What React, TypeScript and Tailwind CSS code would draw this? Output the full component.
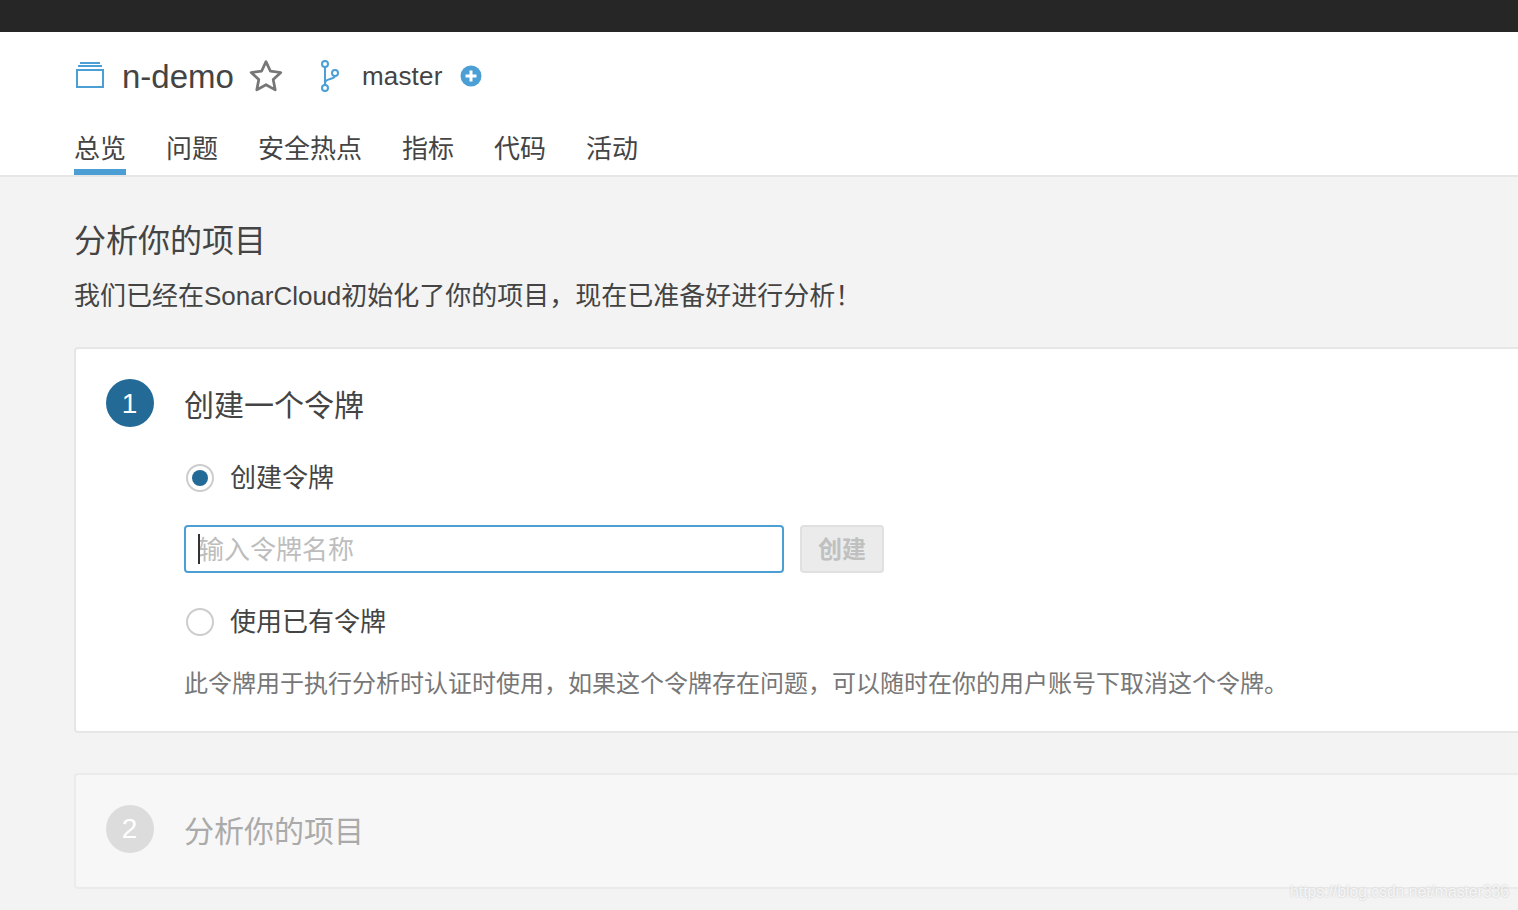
const font = { fontFamily: '"Liberation Sans", "Noto Sans CJK SC", sans-serif' };

const tabs = ['总览', '问题', '安全热点', '指标', '代码', '活动'];

function ProjectIcon() {
  return (
    <svg width="31" height="28" viewBox="0 0 31 28" fill="none" stroke="#4b9fd5" strokeWidth="2">
      <rect x="3" y="8" width="26" height="17" />
      <path d="M4 4h24M6 1h20" />
    </svg>
  );
}

function StarIcon() {
  return (
    <svg width="36" height="36" viewBox="0 0 34 34" fill="none" stroke="#777" strokeWidth="2.6" strokeLinejoin="round">
      <path d="M17 3.5l4.2 9 9.8 1.2-7.2 6.7 1.9 9.7-8.7-4.9-8.7 4.9 1.9-9.7L3 13.7l9.8-1.2z" />
    </svg>
  );
}

function BranchIcon() {
  return (
    <svg width="24" height="34" viewBox="0 0 24 34" fill="none" stroke="#4b9fd5" strokeWidth="2">
      <circle cx="7" cy="5" r="3" />
      <circle cx="7" cy="29" r="3" />
      <circle cx="17" cy="14" r="3" />
      <path d="M7 8v18M7 24c0-5 9-3 10-7" />
    </svg>
  );
}

function PlusIcon() {
  return (
    <svg width="22" height="22" viewBox="0 0 22 22">
      <circle cx="11" cy="11" r="10.5" fill="#4b9fd5" />
      <path d="M11 5.5v11M5.5 11h11" stroke="#fff" strokeWidth="3" />
    </svg>
  );
}

function Radio({ checked }: { checked?: boolean }) {
  return (
    <span className="flex h-7 w-7 shrink-0 items-center justify-center rounded-full border-2 border-[#cdcdcd] bg-white">
      {checked && <span className="h-[16px] w-[16px] rounded-full bg-[#236a97]" />}
    </span>
  );
}

export default function App() {
  return (
    <div style={font} className="relative h-[910px] w-[1518px] overflow-hidden bg-[#f3f3f3] text-[#444]">
      <div className="h-8 bg-[#262626]" />

      <header className="h-[145px] border-b-2 border-[#e6e6e6] bg-white pl-[74px]">
        <div className="flex h-[88px] items-center">
          <ProjectIcon />
          <span className="ml-[17px] pt-[1px] text-[33px] leading-none">n-demo</span>
          <span className="ml-[14px] flex"><StarIcon /></span>
          <span className="ml-[34px] flex"><BranchIcon /></span>
          <span className="ml-[20px] text-[26px] leading-none tracking-[0.2px]">master</span>
          <span className="ml-[17px] flex"><PlusIcon /></span>
        </div>
        <nav className="flex gap-10">
          {tabs.map((t, i) => (
            <div
              key={t}
              className={`h-[55px] border-b-[6px] pt-[12px] text-[26px] leading-[34px] ${i === 0 ? 'border-[#4b9fd5]' : 'border-transparent'}`}
            >
              {t}
            </div>
          ))}
        </nav>
      </header>

      <main className="pl-[74px]">
        <h1 className="mt-[44px] text-[32px] leading-10 font-normal">分析你的项目</h1>
        <p className="mt-[17px] text-[26px] leading-9">我们已经在SonarCloud初始化了你的项目，现在已准备好进行分析！</p>

        <section className="mt-[33px] h-[386px] rounded-l-[4px] border-2 border-r-0 border-[#e6e6e6] bg-white pl-[30px] pt-[30px]">
          <div className="flex h-12 items-start">
            <span className="flex h-12 w-12 items-center justify-center rounded-full bg-[#236a97] pr-[1px] pt-[1px] text-[28px] text-white">1</span>
            <h2 className="ml-[30px] mt-[3px] text-[30px] leading-[48px]">创建一个令牌</h2>
          </div>
          <div className="pl-[78px]">
            <label className="mt-[13px] flex h-[76px] items-center pl-[2px]">
              <Radio checked />
              <span className="ml-4 text-[26px]">创建令牌</span>
            </label>
            <div className="mt-[9px] flex items-center">
              <div className="relative flex h-12 w-[600px] items-center rounded-[4px] border-2 border-[#4b9fd5] bg-white pl-3 pt-[2px] text-[26px] text-[#bdbdbd]">
                输入令牌名称
                <span className="absolute left-[12px] top-[7px] h-[30px] w-[2px] bg-[#333]" />
              </div>
              <button className="ml-4 flex h-12 w-[84px] items-center justify-center rounded-[4px] border-2 border-[#e0e0e0] bg-[#ebebeb] pt-[2px] text-[24px] font-bold text-[#c0c0c0]">
                创建
              </button>
            </div>
            <label className="mt-[11px] flex h-[76px] items-center pl-[2px]">
              <Radio />
              <span className="ml-4 text-[26px]">使用已有令牌</span>
            </label>
            <p className="mt-[8px] text-[24px] leading-8 text-[#777]">此令牌用于执行分析时认证时使用，如果这个令牌存在问题，可以随时在你的用户账号下取消这个令牌。</p>
          </div>
        </section>

        <section className="mt-[40px] flex h-[116px] items-start rounded-l-[4px] border-2 border-r-0 border-[#ebebeb] bg-[#f7f7f7] pl-[30px] pt-[30px]">
          <span className="flex h-12 w-12 items-center justify-center rounded-full bg-[#dcdcdc] pr-[1px] text-[28px] text-white">2</span>
          <h2 className="ml-[30px] text-[30px] leading-[54px] text-[#aaa]">分析你的项目</h2>
        </section>
      </main>

      <span className="absolute bottom-[6px] right-[9px] text-[15.7px] leading-6 text-white/80 [text-shadow:0_0_2px_#bbb]">https://blog.csdn.net/master336</span>
    </div>
  );
}
